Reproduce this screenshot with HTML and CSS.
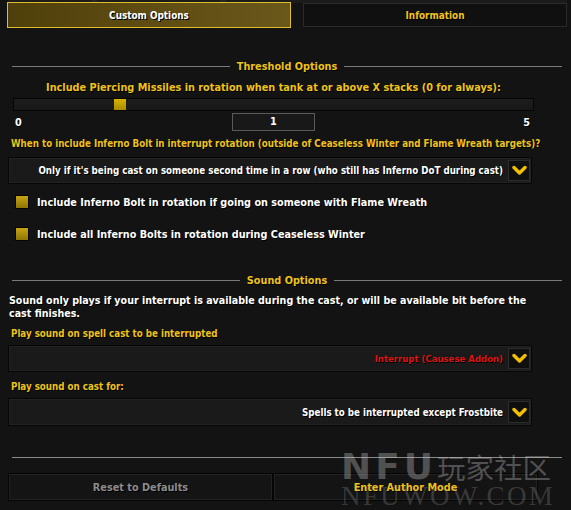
FILE: index.html
```html
<!DOCTYPE html>
<html>
<head>
  <title>Custom Options</title>
  <link rel="stylesheet" href="styles.css">
</head>
<body>
  <div class="frame">
    <div class="topstrip"></div>

    <!-- Tabs -->
    <div class="tabs">
      <div class="tab tab-active">Custom Options</div>
      <div class="tab">Information</div>
    </div>

    <!-- Threshold Options -->
    <div class="header header-threshold"><span class="header-text">Threshold Options</span></div>

    <div class="slider-block">
      <div class="slider-label">Include Piercing Missiles in rotation when tank at or above X stacks (0 for always):</div>
      <div class="slider"><div class="thumb"></div></div>
      <div class="slider-values">
        <span class="val">0</span>
        <span class="editbox">1</span>
        <span class="val">5</span>
      </div>
    </div>

    <div class="label label-when">When to include Inferno Bolt in interrupt rotation (outside of Ceaseless Winter and Flame Wreath targets)?</div>
    <div class="dropdown dropdown-first">
      <span class="dropdown-text">Only if it's being cast on someone second time in a row (who still has Inferno DoT during cast)</span>
      <span class="arrow"><svg width="15" height="11" viewBox="0 0 15 11"><polyline points="2,2.5 7.5,8 13,2.5" fill="none" stroke="#f2c000" stroke-width="3.4" stroke-linecap="round" stroke-linejoin="round"/></svg></span>
    </div>

    <div class="check check-first"><span class="box"></span>Include Inferno Bolt in rotation if going on someone with Flame Wreath</div>
    <div class="check check-second"><span class="box"></span>Include all Inferno Bolts in rotation during Ceaseless Winter</div>

    <!-- Sound Options -->
    <div class="header header-sound"><span class="header-text">Sound Options</span></div>

    <p class="note">Sound only plays if your interrupt is available during the cast, or will be available bit before the cast finishes.</p>

    <div class="label label-spell">Play sound on spell cast to be interrupted</div>
    <div class="dropdown dropdown-mid">
      <span class="dropdown-text red">Interrupt (Causese Addon)</span>
      <span class="arrow"><svg width="15" height="11" viewBox="0 0 15 11"><polyline points="2,2.5 7.5,8 13,2.5" fill="none" stroke="#f2c000" stroke-width="3.4" stroke-linecap="round" stroke-linejoin="round"/></svg></span>
    </div>

    <div class="label label-cast">Play sound on cast for:</div>
    <div class="dropdown dropdown-last">
      <span class="dropdown-text">Spells to be interrupted except Frostbite</span>
      <span class="arrow"><svg width="15" height="11" viewBox="0 0 15 11"><polyline points="2,2.5 7.5,8 13,2.5" fill="none" stroke="#f2c000" stroke-width="3.4" stroke-linecap="round" stroke-linejoin="round"/></svg></span>
    </div>

    <div class="divider"></div>

    <div class="buttons">
      <div class="btn btn-disabled">Reset to Defaults</div>
      <div class="btn">Enter Author Mode</div>
    </div>

    <!-- watermark over the bottom corner -->
    <div class="watermark">
      <div class="wm-top"><span class="wm-nfu">NFU</span><span class="wm-cjk">玩家社区</span></div>
      <div class="wm-bottom">NFUWOW.COM</div>
    </div>
  </div>
</body>
</html>
```

FILE: styles.css
```css
body {
    margin: 0;
    background-color: #131313;
    font-family: "DejaVu Sans Condensed", "DejaVu Sans", sans-serif;
    font-stretch: condensed;
    font-size: 10.8px;
    font-weight: bold;
    color: #fff;
    overflow: hidden;
}

.frame {
    position: relative;
    width: 571px;
    height: 510px;
    overflow: hidden;
}

.topstrip {
    height: 3px;
    margin: 0 4px 0 8px;
    background: linear-gradient(90deg, #1b1b1b 0%, #1b1b1b 15%, #262626 15%, #262626 16%, #1b1b1b 16%, #1b1b1b 38%, #262626 38%, #262626 39%, #1b1b1b 39%);
    margin-bottom: -3px;
}

/* ---- tabs ---- */
.tabs {
    display: flex;
    gap: 12px;
    height: 28px;
    padding-left: 7px;
    padding-right: 4px;
    align-items: flex-end;
}

.tab {
    width: 264px;
    height: 24px;
    box-sizing: border-box;
    border: 1px solid #2a2a2a;
    background-color: #101010;
    color: #f0c41c;
    font-size: 9.9px;
    display: flex;
    align-items: center;
    justify-content: center;
    text-shadow: 1px 1px 0 #000;
    margin-bottom: 1px;
}

.tab-active {
    width: 284px;
    height: 26px;
    margin-bottom: 0;
    border: 1px solid #e0bd2c;
    background: linear-gradient(90deg, #4f3f0a, #5e4c12 50%, #6a571a);
    color: #fff;
}

/* ---- section headers ---- */
.header {
    display: flex;
    align-items: center;
    gap: 7px;
    height: 16px;
    margin: 0 9px 0 12px;
    color: #eec21a;
    font-size: 10.8px;
    text-shadow: 1px 1px 0 #000;
}

.header::before,
.header::after {
    content: "";
    flex: 1;
    height: 1px;
    background-color: #7a7a7a;
}

.header-threshold {
    margin-top: 30px;
}

.header-sound {
    margin-top: 31px;
}

/* ---- slider ---- */
.slider-block {
    width: 521px;
    margin-left: 13px;
}

.slider-label {
    margin-top: 7px;
    height: 14px;
    line-height: 14px;
    text-align: center;
    color: #eec21a;
    white-space: nowrap;
    text-shadow: 1px 1px 0 #000;
}

.slider {
    margin-top: 3px;
    height: 13px;
    box-sizing: border-box;
    border: 1px solid #050505;
    background: linear-gradient(180deg, #1d1d1d, #181818);
    position: relative;
}

.thumb {
    position: absolute;
    left: 100px;
    top: 0;
    width: 12px;
    height: 11px;
    background: linear-gradient(180deg, #d9b300, #a88a00);
}

.slider-values {
    display: flex;
    justify-content: space-between;
    align-items: center;
    margin-top: 2px;
    height: 18px;
    padding: 0 4px 0 2px;
}

.val {
    text-shadow: 1px 1px 0 #000;
}

.editbox {
    width: 83px;
    height: 18px;
    box-sizing: border-box;
    border: 1px solid #5a5a5a;
    background-color: #181818;
    text-align: center;
    line-height: 16px;
    margin-left: 2px;
}

/* ---- labels and dropdowns ---- */
.label {
    height: 14px;
    line-height: 14px;
    margin-left: 11px;
    color: #eec21a;
    font-size: 9.7px;
    text-shadow: 1px 1px 0 #000;
    white-space: nowrap;
}

.label-when {
    margin-top: 6px;
}

.label-spell {
    margin-top: 7px;
}

.label-cast {
    margin-top: 8px;
}

.dropdown {
    display: flex;
    align-items: center;
    justify-content: flex-end;
    gap: 5px;
    width: 524px;
    height: 27px;
    box-sizing: border-box;
    margin-top: 4px;
    margin-left: 8px;
    padding: 2px 1px 2px 0;
    border: 1px solid #060606;
    background-color: #1a1a1a;
    box-shadow: inset 0 0 0 1px #222;
    overflow: hidden;
}

.dropdown-first {
    margin-top: 6px;
}

.dropdown-last {
    height: 28px;
}

.dropdown-text {
    white-space: nowrap;
    font-size: 9.7px;
    text-shadow: 1px 1px 0 #000;
}

.red {
    color: #dd1414;
    font-size: 9.5px;
}

.arrow {
    flex: none;
    width: 22px;
    height: 100%;
    box-sizing: border-box;
    border: 1px solid #2c2c2c;
    background-color: #0f0f0f;
    display: flex;
    align-items: center;
    justify-content: center;
}

/* ---- checkboxes ---- */
.check {
    display: flex;
    align-items: center;
    gap: 8px;
    height: 14px;
    margin-left: 15px;
    font-size: 10.75px;
    text-shadow: 1px 1px 0 #000;
}

.check-first {
    margin-top: 11px;
}

.check-second {
    margin-top: 18px;
}

.box {
    width: 14px;
    height: 14px;
    box-sizing: border-box;
    border: 1px solid #050505;
    background: linear-gradient(180deg, #c9a412, #8f7406);
}

/* ---- note ---- */
.note {
    margin: 6px 36px 0 9px;
    line-height: 13px;
    font-size: 10.6px;
    text-shadow: 1px 1px 0 #000;
}

/* ---- bottom ---- */
.divider {
    margin: 31px 9px 0 12px;
    height: 1px;
    background-color: #8a8a8a;
}

.buttons {
    display: flex;
    margin-top: 15px;
    margin-left: 8px;
    width: 530px;
    height: 28px;
}

.btn {
    flex: 1;
    box-sizing: border-box;
    border: 1px solid #050505;
    box-shadow: inset 0 0 0 1px #222;
    background-color: #141414;
    color: #eec21a;
    display: flex;
    align-items: center;
    justify-content: center;
    text-shadow: 1px 1px 0 #000;
}

.btn-disabled {
    color: #8c8c8c;
}

/* ---- watermark ---- */
.watermark {
    position: absolute;
    left: 341px;
    top: 449px;
    pointer-events: none;
    color: rgba(200, 200, 200, 0.34);
    font-weight: normal;
}

.wm-top {
    display: flex;
    align-items: center;
    height: 34px;
}

.wm-nfu {
    font-family: "DejaVu Sans", sans-serif;
    font-stretch: normal;
    font-weight: bold;
    font-size: 36px;
    letter-spacing: 4px;
}

.wm-cjk {
    font-family: "Noto Sans CJK SC", sans-serif;
    font-stretch: normal;
    font-size: 28.5px;
    margin-left: 0;
}

.wm-bottom {
    font-family: "Liberation Serif", serif;
    font-stretch: normal;
    font-size: 27px;
    letter-spacing: 2.4px;
    line-height: 26px;
    color: rgba(170, 170, 170, 0.26);
}
```
